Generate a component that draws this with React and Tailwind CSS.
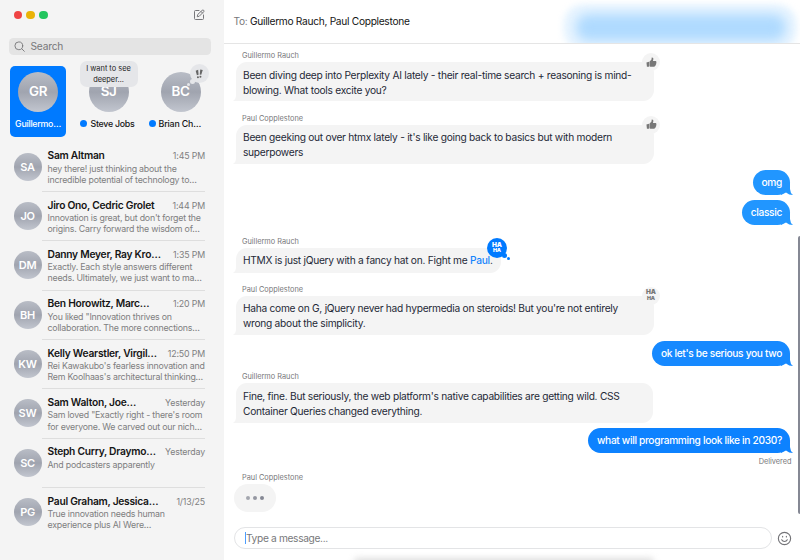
import React from "react";

const conversations = [
  ["SA", "Sam Altman", "1:45 PM", "hey there! just thinking about the", "incredible potential of technology to…"],
  ["JO", "Jiro Ono, Cedric Grolet", "1:44 PM", "Innovation is great, but don't forget the", "origins. Carry forward the wisdom of…"],
  ["DM", "Danny Meyer, Ray Kro…", "1:35 PM", "Exactly. Each style answers different", "needs. Ultimately, we just want to ma…"],
  ["BH", "Ben Horowitz, Marc…", "1:20 PM", "You liked \"Innovation thrives on", "collaboration. The more connections…"],
  ["KW", "Kelly Wearstler, Virgil…", "12:50 PM", "Rei Kawakubo's fearless innovation and", "Rem Koolhaas's architectural thinking…"],
  ["SW", "Sam Walton, Joe…", "Yesterday", "Sam loved \"Exactly right - there's room", "for everyone. We carved out our nich…"],
  ["SC", "Steph Curry, Draymo…", "Yesterday", "And podcasters apparently", ""],
  ["PG", "Paul Graham, Jessica…", "1/13/25", "True innovation needs human", "experience plus AI Were…"],
];

function Avatar({ initials, className }) {
  return (
    <div className={`flex shrink-0 items-center justify-center rounded-full bg-linear-to-b from-[#b9bdc6] via-[#a0a4af] to-[#c2c6cf] font-semibold text-white ${className}`}>
      {initials}
    </div>
  );
}

function Conversation({ item, last }) {
  const [initials, name, time, line1, line2] = item;
  return (
    <div className="flex h-[49.35px] pl-[13.5px]">
      <Avatar initials={initials} className="mt-[10px] size-[28px] pt-px text-[11px] tracking-[-0.3px]" />
      <div className={`ml-[0.5px] w-[163px] border-b pt-[7px] pl-[5.5px] whitespace-nowrap ${last ? "border-transparent" : "border-[#dedede]"}`}>
        <div className="flex h-[13px] items-center justify-between">
          <span className="text-[10.25px] font-semibold tracking-[-0.26px] text-[#151515]">{name}</span>
          <span className="text-[8.8px] tracking-[-0.15px] text-[#7e7e80]">{time}</span>
        </div>
        <div className="text-[8.8px] leading-[11.3px] tracking-[-0.21px] text-[#7e7e80]">
          <div>{line1}</div>
          <div>{line2}</div>
        </div>
      </div>
    </div>
  );
}

function Thumb() {
  return (
    <svg viewBox="0 0 24 24" className="size-[11px]" fill="#777">
      <path d="M1 12 6.5 10.5v11L2 21zM7.5 10.5 12 5.5l.5-4.5c2.8-.3 4 1.6 3.5 4l-.8 3.5H21c1.5.2 2 1.6 1.4 2.8.8 1 .7 2.3-.3 3.1.4 1.2 0 2.2-1 2.8.1 1.3-.5 2-1.8 2.3-.1 1.3-1 2-2.5 2H12c-2 0-3.2-.6-4.5-1.5z" />
    </svg>
  );
}

function Haha({ blue }) {
  return (
    <span className={`flex flex-col items-center font-black tracking-normal ${blue ? "text-white" : "text-[#777]"}`}>
      <span className="text-[6.5px] leading-[5.8px]">HA</span>
      <span className="text-[5.3px] leading-[5px]">HA</span>
    </span>
  );
}

function Reaction({ kind }) {
  if (kind === "blue") {
    return (
      <div className="absolute -top-[10px] -right-[6px] flex size-[20px] items-center justify-center rounded-full bg-[#007aff]">
        <Haha blue />
        <span className="absolute right-0 bottom-0 size-[5px] rounded-full bg-[#007aff]" />
        <span className="absolute -right-[3px] -bottom-[2.5px] size-[3px] rounded-full bg-[#007aff]" />
      </div>
    );
  }
  return (
    <div className="absolute -top-[9px] -right-[6px] flex size-[18px] items-center justify-center rounded-full bg-[#f4f4f4]">
      {kind === "thumb" ? <Thumb /> : <Haha />}
    </div>
  );
}

function Received({ name, gap, lines, width, reaction }) {
  return (
    <div className={gap}>
      <div className="h-[13px] pl-[18px] text-[7.35px] leading-[14px] text-[#77777a]">{name}</div>
      <div className={`relative ml-[12px] rounded-[11px] bg-[#f4f4f4] pl-[7px] text-[10.2px] leading-[14.7px] tracking-[-0.27px] text-[#1f2937] ${width} ${lines.length === 1 ? "h-[25px] pt-[5.2px]" : "h-[39.3px] pt-[5.8px]"}`}>
        <svg viewBox="0 0 12 10" className="absolute bottom-0 -left-[3px] h-[10px] w-[12px]" fill="#f4f4f4">
          <path d="M3 0V5Q3 8 0 10H12V0Z" />
        </svg>
        {lines.map((line, i) => (
          <div key={i} className="relative whitespace-nowrap">{line}</div>
        ))}
        {reaction && <Reaction kind={reaction} />}
      </div>
    </div>
  );
}

function Sent({ text, gap, color }) {
  return (
    <div className={`flex justify-end pr-[10px] ${gap} ${color}`}>
      <div className="relative flex h-[25px] items-center rounded-[12.5px] bg-current pr-[8px] pl-[9px] text-[10.2px] font-medium tracking-[-0.34px]">
        <svg viewBox="0 0 12 12" className="absolute -right-[3px] bottom-0 size-[12px]" fill="currentColor">
          <path d="M9 0V6Q9.2 10 12 12Q8 12 5 9.5L0 12V0Z" />
        </svg>
        <span className="relative pt-[0.6px] whitespace-nowrap text-white">{text}</span>
      </div>
    </div>
  );
}

export default function App() {
  return (
    <div className="flex h-[560px] w-[800px] overflow-hidden bg-white font-['Inter',sans-serif]">
      <aside className="flex h-full w-[224px] shrink-0 flex-col bg-[#f4f4f4]">
        <div className="flex h-[30px] items-center justify-between pr-[19px] pl-[13.5px]">
          <div className="flex gap-[4.4px]">
            <span className="size-[8.5px] rounded-full bg-[#ef4444]" />
            <span className="size-[8.5px] rounded-full bg-[#eab308]" />
            <span className="size-[8.5px] rounded-full bg-[#22c55e]" />
          </div>
          <svg viewBox="0 0 24 24" className="size-[12px]" fill="none" stroke="#77777a" strokeWidth="2" strokeLinecap="round" strokeLinejoin="round">
            <path d="M12 3H5a2 2 0 0 0-2 2v14a2 2 0 0 0 2 2h14a2 2 0 0 0 2-2v-7" />
            <path d="M18.4 2.6a2.1 2.1 0 0 1 3 3L12.4 14.6 8.5 15.5 9.4 11.6zM16 5l3 3" />
          </svg>
        </div>
        <div className="mt-[8px] ml-[9px] flex h-[17px] w-[202px] items-center rounded-[4.5px] bg-[#e4e4e4] pl-[5px] text-[10.2px] tracking-[-0.2px] text-[#77777a]">
          <svg viewBox="0 0 24 24" className="mr-[5.5px] size-[11px]" fill="none" stroke="#77777a" strokeWidth="2" strokeLinecap="round">
            <circle cx="10.5" cy="10.5" r="8.5" />
            <path d="m17 17 5.5 5.5" />
          </svg>
          Search
        </div>
        <div className="mt-[11px] ml-[10px] flex h-[70.5px] text-[8.8px] font-medium tracking-[-0.25px] text-[#151515]">
          <div className="flex w-[56px] flex-col items-center rounded-[5px] bg-[#007aff] pt-[5.5px] text-white">
            <Avatar initials="GR" className="size-[40px] text-[13.4px] tracking-[-0.4px]" />
            <span className="mt-[6px] leading-[12px]">Guillermo…</span>
          </div>
          <div className="relative ml-[10.5px] flex w-[64px] flex-col items-center pt-[5.5px]">
            <Avatar initials="SJ" className="size-[40px] text-[13.4px] tracking-[-0.4px]" />
            <div className="absolute -top-[5px] left-[3px] flex h-[26px] w-[58px] flex-col items-center justify-center rounded-[7px] bg-[#e5e6e9] pt-px text-[7.4px] leading-[10.6px] font-normal tracking-normal text-[#222]">
              <span>I want to see</span>
              <span>deeper…</span>
            </div>
            <div className="mt-[6px] -ml-[2px] flex items-center leading-[12px] whitespace-nowrap">
              <span className="mr-[3px] size-[7px] rounded-full bg-[#007aff]" />
              Steve Jobs
            </div>
          </div>
          <div className="relative ml-[8px] flex w-[64px] flex-col items-center pt-[5.5px]">
            <Avatar initials="BC" className="size-[40px] text-[13.4px] tracking-[-0.4px]" />
            <div className="absolute -top-[2px] right-[4px] flex size-[19px] items-center justify-center rounded-full bg-[#e5e6e9]">
              <svg viewBox="0 0 12 14" className="h-[12px] w-[10px]" fill="#666">
                <path d="M2 3 5 2l.5 6-2 .5zM7.5 1.5l3 .8L8.7 8l-1.8-.4z" />
                <circle cx="4.7" cy="11" r="1.2" />
                <circle cx="7.7" cy="10.4" r="1.2" />
              </svg>
              <span className="absolute -bottom-[1px] left-0 size-[5px] rounded-full bg-[#e5e6e9]" />
              <span className="absolute -bottom-[3px] -left-[3px] size-[3px] rounded-full bg-[#e5e6e9]" />
            </div>
            <div className="mt-[6px] flex items-center self-start leading-[12px] tracking-[-0.15px]">
              <span className="mr-[3px] size-[7px] rounded-full bg-[#007aff]" />
              Brian Ch…
            </div>
          </div>
        </div>
        <div className="mt-[6px]">
          {conversations.map((item, i) => (
            <Conversation key={item[0]} item={item} last={i === conversations.length - 1} />
          ))}
        </div>
      </aside>

      <main className="relative flex min-w-0 flex-1 flex-col">
        <header className="relative h-[44px] shrink-0 overflow-hidden border-b border-[#e5e5e5] pl-[9.5px] text-[10.2px] leading-[42px] tracking-[-0.3px] text-[#151515]">
          <span className="text-[#77777a]">To: </span>Guillermo Rauch, Paul Copplestone
          <div className="absolute top-[4px] left-[339px] h-[46px] w-[234px] rounded-[20px] bg-[#e9f5ff] blur-[3px]" />
          <div className="absolute top-[14px] left-[352px] h-[27px] w-[210px] rounded-[12px] bg-[#afdaff] blur-[6px]" />
        </header>
        <section className="h-[474px] shrink-0 pt-[5px]">
          <Received name="Guillermo Rauch" gap="" width="w-[418px]" reaction="thumb" lines={["Been diving deep into Perplexity AI lately - their real-time search + reasoning is mind-", "blowing. What tools excite you?"]} />
          <Received name="Paul Copplestone" gap="mt-[10.4px]" width="w-[418px]" reaction="thumb" lines={["Been geeking out over htmx lately - it's like going back to basics but with modern", "superpowers"]} />
          <Sent text="omg" gap="mt-[5.8px]" color="text-[#2196ff]" />
          <Sent text="classic" gap="mt-[5.2px]" color="text-[#2196ff]" />
          <Received name="Guillermo Rauch" gap="mt-[10px]" width="w-[265px]" reaction="blue" lines={[<>HTMX is just jQuery with a fancy hat on. Fight me <span className="font-medium text-[#1684fc]">Paul</span>.</>]} />
          <Received name="Paul Copplestone" gap="mt-[9.7px]" width="w-[418px]" reaction="haha" lines={["Haha come on G, jQuery never had hypermedia on steroids! But you're not entirely", "wrong about the simplicity."]} />
          <Sent text="ok let's be serious you two" gap="mt-[6px]" color="text-[#1689ff]" />
          <Received name="Guillermo Rauch" gap="mt-[4.5px]" width="w-[417px]" lines={["Fine, fine. But seriously, the web platform's native capabilities are getting wild. CSS", "Container Queries changed everything."]} />
          <Sent text="what will programming look like in 2030?" gap="mt-[5.4px]" color="text-[#0d82ff]" />
          <div className="mt-[1.5px] h-[13px] pr-[8.5px] text-right text-[7.35px] leading-[13px] text-[#77777a]">Delivered</div>
          <div className="mt-[3.5px] h-[13px] pl-[18px] text-[7.35px] leading-[13px] text-[#77777a]">Paul Copplestone</div>
          <div className="relative ml-[10px] flex h-[28px] w-[42px] items-center gap-[2.6px] rounded-[14px] bg-[#f4f4f4] pl-[12px]">
            <span className="size-[4.4px] rounded-full bg-[#a3a6ae]" />
            <span className="size-[4.4px] rounded-full bg-[#9497a1]" />
            <span className="size-[4.4px] rounded-full bg-[#858894]" />
          </div>
        </section>
        <footer className="relative flex h-[42px] shrink-0 items-start overflow-hidden pt-[9px] pl-[10px]">
          <div className="flex h-[22px] w-[538px] items-center rounded-full border border-[#e3e4e6] pl-[10px] text-[10.2px] tracking-[-0.34px] text-[#77777a]">
            <span className="h-[12px] w-px bg-[#4c9dff]" />
            <span className="pt-px">Type a message...</span>
          </div>
          <svg viewBox="0 0 24 24" className="mt-[3.5px] ml-[5px] size-[15px]" fill="none" stroke="#737377" strokeWidth="1.8" strokeLinecap="round">
            <circle cx="12" cy="12" r="9.8" />
            <path d="M7.5 14c1.8 3.6 7.2 3.6 9 0M9 8.5v1M15 8.5v1" />
          </svg>
          <div className="absolute top-[40px] left-[130px] h-[8px] w-[300px] rounded-full bg-[#dedede] blur-[3px]" />
        </footer>
        <div className="absolute top-[236px] right-0 h-[278px] w-[2.5px] rounded-l-[2px] bg-[#858894]" />
      </main>
    </div>
  );
}
